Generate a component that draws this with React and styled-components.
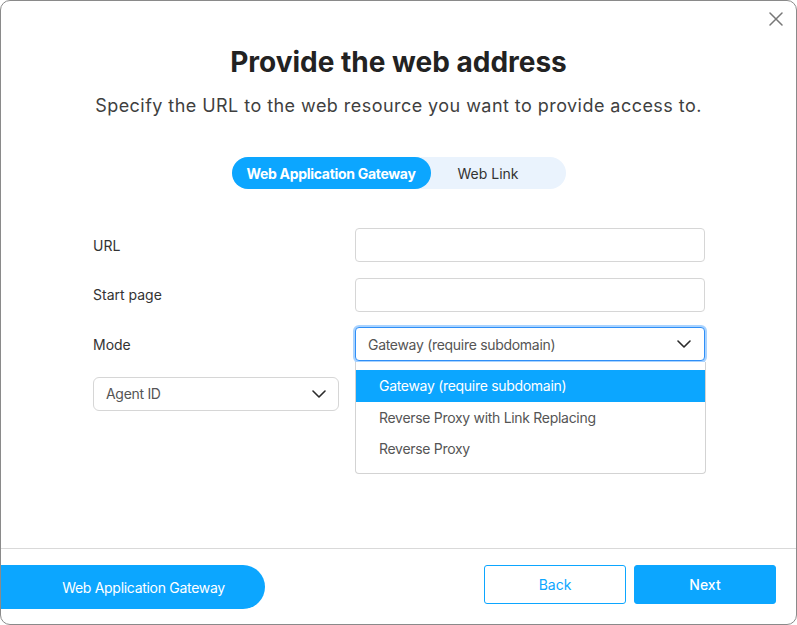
import React, { useState } from 'react';
import styled, { createGlobalStyle } from 'styled-components';

const GlobalStyle = createGlobalStyle`
  html, body {
    margin: 0;
    padding: 0;
    background: #fff;
  }
  * {
    box-sizing: border-box;
  }
  body {
    font-family: Inter, "Noto Sans", sans-serif;
    color: #333;
  }
`;

const BLUE = '#0ca6ff';

const Chevron = () => (
  <svg width="14" height="8" viewBox="0 0 14 8" fill="none">
    <path d="M1 1l6 6 6-6" stroke="#2b2b2b" strokeWidth="1.6" strokeLinecap="round" strokeLinejoin="round" />
  </svg>
);

const CloseIcon = () => (
  <svg width="14" height="14" viewBox="0 0 14 14" fill="none">
    <path d="M1 1l12 12M13 1L1 13" stroke="#777" strokeWidth="1.5" strokeLinecap="round" />
  </svg>
);

const modes = [
  'Gateway (require subdomain)',
  'Reverse Proxy with Link Replacing',
  'Reverse Proxy',
];

export default function App() {
  const [tab, setTab] = useState('gateway');
  const [mode] = useState(modes[0]);

  return (
    <>
      <GlobalStyle />
      <Dialog>
        <Close aria-label="Close">
          <CloseIcon />
        </Close>
        <Body>
          <Title>Provide the web address</Title>
          <Subtitle>Specify the URL to the web resource you want to provide access to.</Subtitle>

          <Toggle>
            <ToggleItem $active={tab === 'gateway'} $width={199} onClick={() => setTab('gateway')}>
              Web Application Gateway
            </ToggleItem>
            <ToggleItem $active={tab === 'link'} $width={115} onClick={() => setTab('link')}>
              Web Link
            </ToggleItem>
          </Toggle>

          <Form>
            <Label>URL</Label>
            <Input />
            <Label>Start page</Label>
            <Input />
            <Label>Mode</Label>
            <SelectWrap>
              <Select $focused>
                <span>{mode}</span>
                <Chevron />
              </Select>
              <Menu>
                {modes.map(m => (
                  <MenuItem key={m} $selected={m === mode}>
                    {m}
                  </MenuItem>
                ))}
              </Menu>
            </SelectWrap>
            <AgentSelect>
              <span>Agent ID</span>
              <Chevron />
            </AgentSelect>
          </Form>
        </Body>

        <Footer>
          <GatewayPill>Web Application Gateway</GatewayPill>
          <Actions>
            <Button>Back</Button>
            <Button $primary>Next</Button>
          </Actions>
        </Footer>
      </Dialog>
    </>
  );
}

const Dialog = styled.div`
  position: relative;
  width: 797px;
  height: 625px;
  border: 1px solid #8a8a8a;
  border-radius: 10px;
  background: #fff;
  display: flex;
  flex-direction: column;
  overflow: hidden;
`;

const Close = styled.button`
  position: absolute;
  top: 11px;
  right: 13px;
  border: none;
  background: none;
  padding: 0;
  width: 14px;
  height: 14px;
  display: flex;
  cursor: pointer;
`;

const Body = styled.div`
  flex: 1;
  display: flex;
  flex-direction: column;
  align-items: center;
  padding-top: 44px;
`;

const Title = styled.h1`
  margin: 0;
  font-size: 28px;
  line-height: 34px;
  font-weight: 700;
  color: #222;
`;

const Subtitle = styled.p`
  margin: 15px 0 0;
  font-size: 18px;
  line-height: 24px;
  letter-spacing: 0.45px;
  color: #3f3f3f;
`;

const Toggle = styled.div`
  margin-top: 39px;
  display: flex;
  height: 32px;
  padding-right: 20px;
  border-radius: 16px;
  background: #eaf3fd;
`;

const ToggleItem = styled.button`
  width: ${p => p.$width}px;
  height: 32px;
  border: none;
  border-radius: 16px;
  padding: 0;
  font-family: inherit;
  font-size: 14px;
  font-weight: ${p => (p.$active ? 700 : 400)};
  letter-spacing: ${p => (p.$active ? '-0.3px' : '0')};
  color: ${p => (p.$active ? '#fff' : '#333')};
  background: ${p => (p.$active ? BLUE : 'transparent')};
  cursor: pointer;
`;

const Form = styled.div`
  align-self: stretch;
  margin-top: 39px;
  padding-left: 92px;
  display: grid;
  grid-template-columns: 262px 350px;
  grid-auto-rows: 34px;
  row-gap: 15.5px;
  align-items: center;
`;

const Label = styled.div`
  font-size: 14px;
  color: #333;
`;

const Input = styled.input`
  height: 34px;
  width: 100%;
  border: 1px solid #d6d6d6;
  border-radius: 4px;
  outline: none;
  font-family: inherit;
`;

const SelectWrap = styled.div`
  position: relative;
  height: 34px;
`;

const Select = styled.div`
  height: 34px;
  display: flex;
  align-items: center;
  justify-content: space-between;
  padding: 0 13px 0 12px;
  border: 1px solid ${p => (p.$focused ? '#2f8ff7' : '#d6d6d6')};
  border-radius: 4px;
  box-shadow: ${p => (p.$focused ? '0 0 0 2px #a9d3ff' : 'none')};
  font-size: 14px;
  letter-spacing: -0.3px;
  color: #555;
  background: #fff;
`;

const AgentSelect = styled(Select)`
  width: 246px;
  border-radius: 6px;
  padding: 0 12px 0 12px;
`;

const Menu = styled.div`
  position: absolute;
  top: 35px;
  left: 0;
  right: -1px;
  padding: 8px 0 8px;
  border: 1px solid #d3d3d3;
  border-top: none;
  border-radius: 0 0 4px 4px;
  background: #fff;
  z-index: 2;
`;

const MenuItem = styled.div`
  height: 31.5px;
  display: flex;
  align-items: center;
  padding-left: 23px;
  font-size: 14px;
  letter-spacing: -0.3px;
  color: ${p => (p.$selected ? '#fff' : '#555')};
  background: ${p => (p.$selected ? BLUE : 'transparent')};
`;

const Footer = styled.div`
  height: 76px;
  border-top: 1px solid #d9d9d9;
  display: flex;
  justify-content: space-between;
  align-items: flex-start;
  padding: 16px 20px 0 0;
`;

const GatewayPill = styled.div`
  margin-left: -1px;
  width: 265px;
  height: 44px;
  border-radius: 0 22px 22px 0;
  background: ${BLUE};
  color: #fff;
  font-size: 14px;
  letter-spacing: -0.3px;
  display: flex;
  align-items: center;
  justify-content: center;
  padding-left: 22px;
`;

const Actions = styled.div`
  display: flex;
  gap: 8px;
`;

const Button = styled.button`
  width: 142px;
  height: 39px;
  border-radius: 3px;
  border: 1px solid ${BLUE};
  background: ${p => (p.$primary ? BLUE : '#fff')};
  color: ${p => (p.$primary ? '#fff' : BLUE)};
  font-family: inherit;
  font-size: 14px;
  font-weight: ${p => (p.$primary ? 500 : 400)};
  cursor: pointer;
`;
